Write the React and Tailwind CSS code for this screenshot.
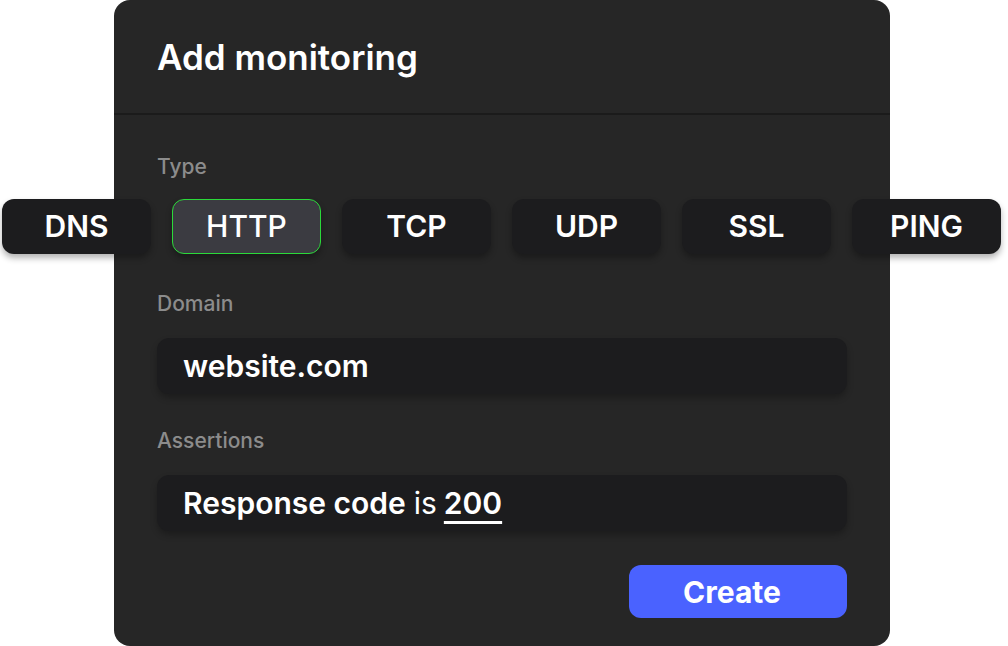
import React from 'react';

const types = ['DNS', 'HTTP', 'TCP', 'UDP', 'SSL', 'PING'];

const Field = ({ label, children }) => (
    <div className="flex flex-col">
        <span className="text-[21px] font-medium text-[#8c8c8c] leading-none">{label}</span>
        <div className="mt-[24px] h-[56px] rounded-[12px] bg-[#1c1c1e] shadow-[0_4px_6px_rgba(0,0,0,0.25)] flex items-center px-[26px] text-[30px] text-white leading-none">
            {children}
        </div>
    </div>
);

export default function App() {
    return (
        <div className="w-[1008px] h-[646px] bg-white overflow-hidden" style={{ fontFamily: 'Inter, "Noto Sans", sans-serif' }}>
            <div className="ml-[114px] w-[776px] h-[646px] bg-[#262626] rounded-[16px] flex flex-col">
                {/* Header */}
                <div className="h-[115px] border-b-2 border-[#1b1b1b] flex items-center px-[43px]">
                    <h1 className="text-[35px] font-semibold text-white leading-none mt-[2px]">Add monitoring</h1>
                </div>

                <div className="px-[43px] pt-[41px] flex flex-col">
                    <span className="text-[21px] font-medium text-[#8c8c8c] leading-none">Type</span>

                    {/* Type chips */}
                    <div className="ml-[-155px] w-[1000px] mt-[22px] flex gap-[21px]">
                        {types.map((t) => (
                            <div
                                key={t}
                                className={
                                    t === 'HTTP'
                                        ? 'w-[149px] h-[55px] rounded-[12px] bg-[#3b3b41] border border-[#2bd93a] flex items-center justify-center text-[30px] font-medium text-white shadow-[0_4px_6px_rgba(0,0,0,0.3)]'
                                        : 'w-[149px] h-[55px] rounded-[12px] bg-[#1c1c1e] flex items-center justify-center text-[30px] font-semibold text-white shadow-[0_4px_6px_rgba(0,0,0,0.3)]'
                                }
                            >
                                {t}
                            </div>
                        ))}
                    </div>

                    <div className="mt-[39px] flex flex-col gap-[36px]">
                        <Field label="Domain">
                            <span className="font-semibold">website.com</span>
                        </Field>
                        <Field label="Assertions">
                            <span className="font-semibold">Response code</span>
                            <span className="ml-[8px] font-normal">is</span>
                            <span className="ml-[7px] font-semibold underline underline-offset-[7px] decoration-[3px]">200</span>
                        </Field>
                    </div>

                    <div className="mt-[34px] flex justify-end">
                        <button className="w-[218px] h-[53px] rounded-[12px] bg-[#4a62ff] text-white text-[30px] font-bold leading-none pr-[12px]">
                            Create
                        </button>
                    </div>
                </div>
            </div>
        </div>
    );
}
